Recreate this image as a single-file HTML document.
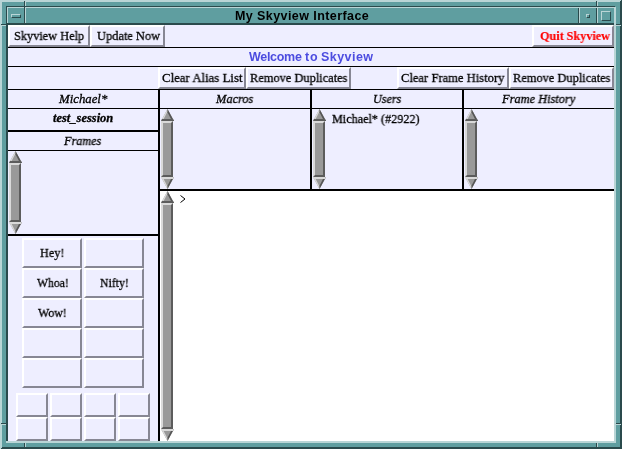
<!DOCTYPE html>
<html>
<head>
<meta charset="utf-8">
<title>My Skyview Interface</title>
<style>
html,body{margin:0;padding:0;}
body{width:622px;height:449px;overflow:hidden;background:#5f9ea0;position:relative;font-family:"Liberation Serif",serif;}
div,span{position:absolute;box-sizing:border-box;}
.L{background:#b9d5d6;}
.D{background:#2a4a4c;}
.K{background:#000;}
#client{left:8px;top:25px;width:606px;height:416px;background:#eeeeff;overflow:hidden;}
.btn{background:#eeeeff;border-style:solid;border-width:2px;border-color:#fff #878794 #878794 #fff;}
.t{white-space:nowrap;color:#000;line-height:normal;font-family:"Liberation Serif",serif;will-change:transform;-webkit-text-stroke:0.3px currentColor;}
svg{position:absolute;display:block;}
.sl{background:#999;border-style:solid;border-width:2px;border-color:#d9d9d9 #5c5c5c #5c5c5c #d9d9d9;}
</style>
</head>
<body>
<!-- window manager frame -->
<div class="L" style="left:0px;top:0px;width:622px;height:2px"></div>
<div class="L" style="left:0px;top:0px;width:2px;height:449px"></div>
<div class="D" style="left:0px;top:447px;width:622px;height:2px"></div>
<div class="D" style="left:620px;top:0px;width:2px;height:449px"></div>
<div class="L" style="left:0px;top:0px;width:621px;height:1px"></div>
<div class="L" style="left:0px;top:1px;width:620px;height:1px"></div>
<div class="L" style="left:0px;top:447px;width:2px;height:1px"></div>
<div class="L" style="left:0px;top:448px;width:1px;height:1px"></div>
<div class="D" style="left:6px;top:6px;width:609px;height:1px"></div>
<div class="D" style="left:6px;top:6px;width:1px;height:436px"></div>
<div class="D" style="left:7px;top:24px;width:1px;height:418px"></div>
<div class="L" style="left:614px;top:7px;width:2px;height:436px"></div>
<div class="L" style="left:6px;top:441px;width:610px;height:2px"></div>
<div class="L" style="left:7px;top:7px;width:607px;height:1px"></div>
<div class="L" style="left:7px;top:7px;width:1px;height:17px"></div>
<div class="D" style="left:7px;top:23px;width:607px;height:2px"></div>
<div class="D" style="left:24px;top:7px;width:1px;height:17px"></div>
<div class="L" style="left:25px;top:7px;width:1px;height:16px"></div>
<div class="D" style="left:578px;top:8px;width:1px;height:16px"></div>
<div class="L" style="left:579px;top:7px;width:1px;height:16px"></div>
<div class="D" style="left:596px;top:8px;width:1px;height:16px"></div>
<div class="L" style="left:597px;top:7px;width:1px;height:16px"></div>
<div class="D" style="left:24px;top:1px;width:1px;height:6px"></div>
<div class="L" style="left:25px;top:2px;width:1px;height:4px"></div>
<div class="D" style="left:596px;top:1px;width:1px;height:6px"></div>
<div class="L" style="left:597px;top:2px;width:1px;height:4px"></div>
<div class="D" style="left:24px;top:443px;width:1px;height:5px"></div>
<div class="L" style="left:25px;top:443px;width:1px;height:4px"></div>
<div class="D" style="left:596px;top:443px;width:1px;height:5px"></div>
<div class="L" style="left:597px;top:443px;width:1px;height:4px"></div>
<div class="D" style="left:1px;top:24px;width:6px;height:1px"></div>
<div class="L" style="left:2px;top:25px;width:4px;height:1px"></div>
<div class="D" style="left:616px;top:24px;width:5px;height:1px"></div>
<div class="L" style="left:616px;top:25px;width:5px;height:1px"></div>
<div class="D" style="left:1px;top:423px;width:6px;height:1px"></div>
<div class="L" style="left:2px;top:424px;width:4px;height:1px"></div>
<div class="D" style="left:616px;top:423px;width:5px;height:1px"></div>
<div class="L" style="left:616px;top:424px;width:5px;height:1px"></div>
<div style="left:11px;top:14px;width:10px;height:4px;border-style:solid;border-width:1px;border-color:#b9d5d6 #2a4a4c #2a4a4c #b9d5d6"></div>
<div style="left:586px;top:14px;width:4px;height:4px;border-style:solid;border-width:1px;border-color:#b9d5d6 #2a4a4c #2a4a4c #b9d5d6"></div>
<div style="left:601px;top:11px;width:10px;height:10px;border-style:solid;border-width:1px;border-color:#b9d5d6 #2a4a4c #2a4a4c #b9d5d6"></div>
<div id="title" class="t" style="left:235.3px;top:8.69px;font-family:'Liberation Sans',sans-serif;font-size:12.5px;font-weight:bold;letter-spacing:0.42px;-webkit-text-stroke:0">My Skyview Interface</div>
<!-- client -->
<div id="client">
<div style="left:152px;top:166px;width:454px;height:250px;background:#fff"></div>
<div class="btn" style="left:0px;top:0px;width:82px;height:22px"></div>
<div class="btn" style="left:82px;top:0px;width:75px;height:22px"></div>
<div class="btn" style="left:524px;top:0px;width:82px;height:22px"></div>
<div class="btn" style="left:150px;top:42px;width:88px;height:22px"></div>
<div class="btn" style="left:238px;top:42px;width:105px;height:22px"></div>
<div class="btn" style="left:389px;top:42px;width:112px;height:22px"></div>
<div class="btn" style="left:501px;top:42px;width:105px;height:22px"></div>
<div class="btn" style="left:14px;top:213px;width:60px;height:30px"></div>
<div class="btn" style="left:76px;top:213px;width:60px;height:30px"></div>
<div class="btn" style="left:14px;top:243px;width:60px;height:30px"></div>
<div class="btn" style="left:76px;top:243px;width:60px;height:30px"></div>
<div class="btn" style="left:14px;top:273px;width:60px;height:30px"></div>
<div class="btn" style="left:76px;top:273px;width:60px;height:30px"></div>
<div class="btn" style="left:14px;top:303px;width:60px;height:30px"></div>
<div class="btn" style="left:76px;top:303px;width:60px;height:30px"></div>
<div class="btn" style="left:14px;top:333px;width:60px;height:30px"></div>
<div class="btn" style="left:76px;top:333px;width:60px;height:30px"></div>
<div class="btn" style="left:8px;top:368px;width:32px;height:24px"></div>
<div class="btn" style="left:42px;top:368px;width:32px;height:24px"></div>
<div class="btn" style="left:76px;top:368px;width:32px;height:24px"></div>
<div class="btn" style="left:110px;top:368px;width:32px;height:24px"></div>
<div class="btn" style="left:8px;top:392px;width:32px;height:24px"></div>
<div class="btn" style="left:42px;top:392px;width:32px;height:24px"></div>
<div class="btn" style="left:76px;top:392px;width:32px;height:24px"></div>
<div class="btn" style="left:110px;top:392px;width:32px;height:24px"></div>
<div class="K" style="left:0px;top:22px;width:606px;height:1px"></div>
<div class="K" style="left:0px;top:41px;width:606px;height:1px"></div>
<div class="K" style="left:0px;top:64px;width:606px;height:1px"></div>
<div class="K" style="left:0px;top:83px;width:606px;height:1px"></div>
<div class="K" style="left:150px;top:64px;width:2px;height:352px"></div>
<div class="K" style="left:302px;top:64px;width:2px;height:102px"></div>
<div class="K" style="left:454px;top:64px;width:2px;height:102px"></div>
<div class="K" style="left:0px;top:105px;width:150px;height:2px"></div>
<div class="K" style="left:0px;top:125px;width:150px;height:1px"></div>
<div class="K" style="left:0px;top:209px;width:150px;height:2px"></div>
<div class="K" style="left:150px;top:164px;width:456px;height:2px"></div>
<svg style="left:153px;top:84px" width="13" height="12" viewBox="0 0 13 12"><polygon points="6.5,0 13,12 0,12" fill="#999"/><polygon points="6.5,0 6.5,2.6 1.6,12 0,12" fill="#d9d9d9"/><polygon points="6.5,0 13,12 11,12 6.5,3.2" fill="#555"/><polygon points="1,10 12,10 13,12 0,12" fill="#5c5c5c"/></svg><div class="sl" style="left:153px;top:96px;width:12px;height:56px"></div><svg style="left:153px;top:152px" width="13" height="12" viewBox="0 0 13 12"><polygon points="0,0 13,0 6.5,12" fill="#999"/><polygon points="0,0 1.6,0 6.5,9.4 6.5,12" fill="#d9d9d9"/><polygon points="13,0 6.5,12 6.5,8.8 11,0" fill="#555"/><polygon points="0,0 13,0 12,2 1,2" fill="#d9d9d9"/></svg>
<svg style="left:305px;top:84px" width="13" height="12" viewBox="0 0 13 12"><polygon points="6.5,0 13,12 0,12" fill="#999"/><polygon points="6.5,0 6.5,2.6 1.6,12 0,12" fill="#d9d9d9"/><polygon points="6.5,0 13,12 11,12 6.5,3.2" fill="#555"/><polygon points="1,10 12,10 13,12 0,12" fill="#5c5c5c"/></svg><div class="sl" style="left:305px;top:96px;width:12px;height:56px"></div><svg style="left:305px;top:152px" width="13" height="12" viewBox="0 0 13 12"><polygon points="0,0 13,0 6.5,12" fill="#999"/><polygon points="0,0 1.6,0 6.5,9.4 6.5,12" fill="#d9d9d9"/><polygon points="13,0 6.5,12 6.5,8.8 11,0" fill="#555"/><polygon points="0,0 13,0 12,2 1,2" fill="#d9d9d9"/></svg>
<svg style="left:457px;top:84px" width="13" height="12" viewBox="0 0 13 12"><polygon points="6.5,0 13,12 0,12" fill="#999"/><polygon points="6.5,0 6.5,2.6 1.6,12 0,12" fill="#d9d9d9"/><polygon points="6.5,0 13,12 11,12 6.5,3.2" fill="#555"/><polygon points="1,10 12,10 13,12 0,12" fill="#5c5c5c"/></svg><div class="sl" style="left:457px;top:96px;width:12px;height:56px"></div><svg style="left:457px;top:152px" width="13" height="12" viewBox="0 0 13 12"><polygon points="0,0 13,0 6.5,12" fill="#999"/><polygon points="0,0 1.6,0 6.5,9.4 6.5,12" fill="#d9d9d9"/><polygon points="13,0 6.5,12 6.5,8.8 11,0" fill="#555"/><polygon points="0,0 13,0 12,2 1,2" fill="#d9d9d9"/></svg>
<svg style="left:1px;top:126px" width="13" height="12" viewBox="0 0 13 12"><polygon points="6.5,0 13,12 0,12" fill="#999"/><polygon points="6.5,0 6.5,2.6 1.6,12 0,12" fill="#d9d9d9"/><polygon points="6.5,0 13,12 11,12 6.5,3.2" fill="#555"/><polygon points="1,10 12,10 13,12 0,12" fill="#5c5c5c"/></svg><div class="sl" style="left:1px;top:138px;width:12px;height:59px"></div><svg style="left:1px;top:197px" width="13" height="12" viewBox="0 0 13 12"><polygon points="0,0 13,0 6.5,12" fill="#999"/><polygon points="0,0 1.6,0 6.5,9.4 6.5,12" fill="#d9d9d9"/><polygon points="13,0 6.5,12 6.5,8.8 11,0" fill="#555"/><polygon points="0,0 13,0 12,2 1,2" fill="#d9d9d9"/></svg>
<svg style="left:153px;top:166px" width="13" height="12" viewBox="0 0 13 12"><polygon points="6.5,0 13,12 0,12" fill="#999"/><polygon points="6.5,0 6.5,2.6 1.6,12 0,12" fill="#d9d9d9"/><polygon points="6.5,0 13,12 11,12 6.5,3.2" fill="#555"/><polygon points="1,10 12,10 13,12 0,12" fill="#5c5c5c"/></svg><div class="sl" style="left:153px;top:178px;width:12px;height:226px"></div><svg style="left:153px;top:404px" width="13" height="12" viewBox="0 0 13 12"><polygon points="0,0 13,0 6.5,12" fill="#999"/><polygon points="0,0 1.6,0 6.5,9.4 6.5,12" fill="#d9d9d9"/><polygon points="13,0 6.5,12 6.5,8.8 11,0" fill="#555"/><polygon points="0,0 13,0 12,2 1,2" fill="#d9d9d9"/></svg>
<div id="t_help" class="t" style="left:6.40px;top:3.42px;font-size:13px;transform:scaleX(0.947);transform-origin:0 0;">Skyview Help</div>
<div id="t_upd" class="t" style="left:89.00px;top:3.42px;font-size:13px;transform:scaleX(0.954);transform-origin:0 0;">Update Now</div>
<div id="t_quit" class="t" style="left:532.00px;top:3.42px;font-size:13px;transform:scaleX(0.94);transform-origin:0 0;font-weight:bold;color:#ff0000;word-spacing:-0.3px;letter-spacing:0px;-webkit-text-stroke:0.15px currentColor;">Quit Skyview</div>
<div id="t_welcome" class="t" style="left:241.00px;top:24.69px;font-size:12.5px;transform:scaleX(1.0);transform-origin:0 0;font-family:'Liberation Sans',sans-serif;font-weight:bold;color:#4c4ce0;-webkit-text-stroke:0;letter-spacing:-0.3px;">Welcome</div>
<div id="t_welcome2" class="t" style="left:297.00px;top:24.69px;font-size:12.5px;transform:scaleX(1.0);transform-origin:0 0;font-family:'Liberation Sans',sans-serif;font-weight:bold;color:#4c4ce0;-webkit-text-stroke:0;letter-spacing:0.9px;">to</div>
<div id="t_welcome3" class="t" style="left:313.00px;top:24.69px;font-size:12.5px;transform:scaleX(1.0);transform-origin:0 0;font-family:'Liberation Sans',sans-serif;font-weight:bold;color:#4c4ce0;-webkit-text-stroke:0;letter-spacing:0.45px;">Skyview</div>
<div id="t_cal" class="t" style="left:154.00px;top:45.42px;font-size:13px;transform:scaleX(0.986);transform-origin:0 0;">Clear Alias List</div>
<div id="t_rd1" class="t" style="left:242.00px;top:45.42px;font-size:13px;transform:scaleX(0.954);transform-origin:0 0;">Remove Duplicates</div>
<div id="t_cfh" class="t" style="left:393.00px;top:45.42px;font-size:13px;transform:scaleX(0.968);transform-origin:0 0;">Clear Frame History</div>
<div id="t_rd2" class="t" style="left:505.00px;top:45.42px;font-size:13px;transform:scaleX(0.954);transform-origin:0 0;">Remove Duplicates</div>
<div id="t_mich" class="t" style="left:51.00px;top:66.86px;font-size:12.5px;transform:scaleX(1.023);transform-origin:0 0;font-style:italic;">Michael*</div>
<div id="t_macros" class="t" style="left:208.00px;top:66.86px;font-size:12.5px;transform:scaleX(0.989);transform-origin:0 0;font-style:italic;">Macros</div>
<div id="t_users" class="t" style="left:364.50px;top:66.86px;font-size:12.5px;transform:scaleX(0.97);transform-origin:0 0;font-style:italic;">Users</div>
<div id="t_fh" class="t" style="left:494.00px;top:66.86px;font-size:12.5px;transform:scaleX(0.991);transform-origin:0 0;font-style:italic;">Frame History</div>
<div id="t_sess" class="t" style="left:45.00px;top:86.31px;font-size:12px;transform:scaleX(1.039);transform-origin:0 0;font-style:italic;font-weight:bold;">test_session</div>
<div id="t_frames" class="t" style="left:56.00px;top:108.86px;font-size:12.5px;transform:scaleX(0.977);transform-origin:0 0;font-style:italic;">Frames</div>
<div id="t_users1" class="t" style="left:324.00px;top:86.42px;font-size:13px;transform:scaleX(0.936);transform-origin:0 0;">Michael* (#2922)</div>
<div id="t_hey" class="t" style="left:32.00px;top:220.42px;font-size:13px;transform:scaleX(0.935);transform-origin:0 0;">Hey!</div>
<div id="t_whoa" class="t" style="left:29.00px;top:250.42px;font-size:13px;transform:scaleX(0.899);transform-origin:0 0;">Whoa!</div>
<div id="t_wow" class="t" style="left:30.00px;top:280.42px;font-size:13px;transform:scaleX(0.916);transform-origin:0 0;">Wow!</div>
<div id="t_nifty" class="t" style="left:91.50px;top:250.42px;font-size:13px;transform:scaleX(0.906);transform-origin:0 0;">Nifty!</div>
<svg id="prompt" style="left:172px;top:170px" width="7" height="9" viewBox="0 0 7 9"><path d="M0.5 0.5 L5 4 L0.5 7.5" fill="none" stroke="#000" stroke-width="1"/></svg>
</div>
</body>
</html>
